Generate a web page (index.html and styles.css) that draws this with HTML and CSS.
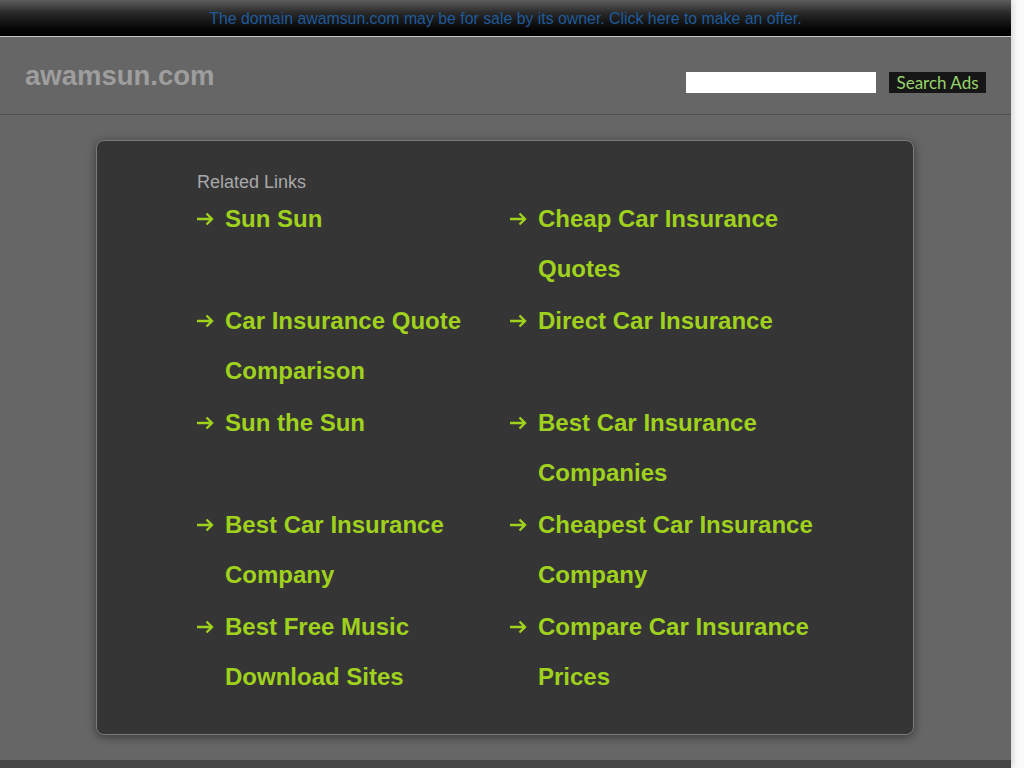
FILE: index.html
```html
<!DOCTYPE html>
<html lang="en">
<head>
<meta charset="utf-8">
<title>awamsun.com</title>
<link rel="stylesheet" href="styles.css">
</head>
<body>
<div class="page">
  <div class="topbar">
    <a class="offer" href="#">The domain awamsun.com may be for sale by its owner. Click here to make an offer.</a>
  </div>
  <div class="header">
    <div class="logo">awamsun.com</div>
    <form class="search">
      <input class="search-input" type="text">
      <button class="search-btn" type="button">Search Ads</button>
    </form>
  </div>
  <div class="content">
    <div class="box">
      <div class="related">Related Links</div>
      <ul class="links">
        <li><svg class="arrow" viewBox="0 0 17 14"><path d="M0 7H15M9.5 1.5L15 7L9.5 12.5"/></svg><a href="#">Sun Sun</a></li>
        <li><svg class="arrow" viewBox="0 0 17 14"><path d="M0 7H15M9.5 1.5L15 7L9.5 12.5"/></svg><a href="#">Cheap Car Insurance Quotes</a></li>
        <li><svg class="arrow" viewBox="0 0 17 14"><path d="M0 7H15M9.5 1.5L15 7L9.5 12.5"/></svg><a href="#">Car Insurance Quote Comparison</a></li>
        <li><svg class="arrow" viewBox="0 0 17 14"><path d="M0 7H15M9.5 1.5L15 7L9.5 12.5"/></svg><a href="#">Direct Car Insurance</a></li>
        <li><svg class="arrow" viewBox="0 0 17 14"><path d="M0 7H15M9.5 1.5L15 7L9.5 12.5"/></svg><a href="#">Sun the Sun</a></li>
        <li><svg class="arrow" viewBox="0 0 17 14"><path d="M0 7H15M9.5 1.5L15 7L9.5 12.5"/></svg><a href="#">Best Car Insurance Companies</a></li>
        <li><svg class="arrow" viewBox="0 0 17 14"><path d="M0 7H15M9.5 1.5L15 7L9.5 12.5"/></svg><a href="#">Best Car Insurance Company</a></li>
        <li><svg class="arrow" viewBox="0 0 17 14"><path d="M0 7H15M9.5 1.5L15 7L9.5 12.5"/></svg><a href="#">Cheapest Car Insurance Company</a></li>
        <li><svg class="arrow" viewBox="0 0 17 14"><path d="M0 7H15M9.5 1.5L15 7L9.5 12.5"/></svg><a href="#">Best Free Music Download Sites</a></li>
        <li><svg class="arrow" viewBox="0 0 17 14"><path d="M0 7H15M9.5 1.5L15 7L9.5 12.5"/></svg><a href="#">Compare Car Insurance Prices</a></li>
      </ul>
    </div>
  </div>
  <div class="footer"></div>
</div>
</body>
</html>
```
FILE: styles.css
```css
html, body {
  margin: 0;
  padding: 0;
}
body {
  background: linear-gradient(to right, #d8d8d8 0, #f4f4f4 6px, #fafafa 100%);
  font-family: "Liberation Sans", Arial, sans-serif;
  height: 768px;
  overflow: hidden;
}
.page {
  width: 1011px;
  background: #666666;
  box-shadow: 2px 0 6px rgba(0,0,0,0.15);
}
.topbar {
  height: 36px;
  background: linear-gradient(to bottom, #5e5e5e 0%, #2a2a2a 35%, #050505 80%, #000 100%);
  border-bottom: 1px solid #c8c8c8;
  display: flex;
  align-items: center;
  justify-content: center;
}
.offer {
  color: #1f5b9a;
  font-size: 15.85px;
  text-decoration: none;
  margin-top: 2px;
}
.header {
  height: 78px;
  border-bottom: 1px solid #4e4e4e;
  display: flex;
  align-items: center;
  justify-content: space-between;
  padding: 0 25px;
  box-sizing: border-box;
}
.logo {
  color: #9e9e9e;
  font-weight: bold;
  font-size: 27.5px;
  margin-top: 1px;
}
.search {
  display: flex;
  align-items: center;
  gap: 13px;
  margin: 14px 0 0 0;
}
.search-input {
  width: 190px;
  height: 21px;
  box-sizing: border-box;
  border: none;
  background: #fff;
  padding: 0;
  margin: 0;
}
.search-btn {
  width: 97px;
  height: 21px;
  box-sizing: border-box;
  border: none;
  background: #161616;
  color: #98d46a;
  font-family: Lato, sans-serif;
  font-size: 17px;
  padding: 0;
  margin: 0;
  line-height: 21px;
}
.content {
  padding: 25px 0 25px 96px;
  height: 645px;
  box-sizing: border-box;
}
.box {
  width: 818px;
  height: 595px;
  box-sizing: border-box;
  background: #353535;
  border: 1px solid #7a7a7a;
  border-radius: 8px;
  box-shadow: 0 2px 10px rgba(0,0,0,0.45);
  padding: 31px 0 0 100px;
}
.related {
  color: #a8a8a8;
  font-size: 18px;
  line-height: 20px;
}
.links {
  list-style: none;
  margin: 2px 0 0 0;
  padding: 0;
  display: grid;
  grid-template-columns: 313px 313px;
  row-gap: 2px;
}
.links li {
  display: flex;
  align-items: flex-start;
  line-height: 50px;
  min-height: 100px;
}
.arrow {
  width: 17px;
  height: 14px;
  flex: none;
  margin: 18px 11px 0 0;
  fill: none;
  stroke: #9fd11d;
  stroke-width: 2.4;
}
.links a {
  color: #9fd11d;
  font-weight: bold;
  font-size: 24px;
  text-decoration: none;
  width: 284px;
}
.footer {
  height: 8px;
  background: #464646;
}
```
